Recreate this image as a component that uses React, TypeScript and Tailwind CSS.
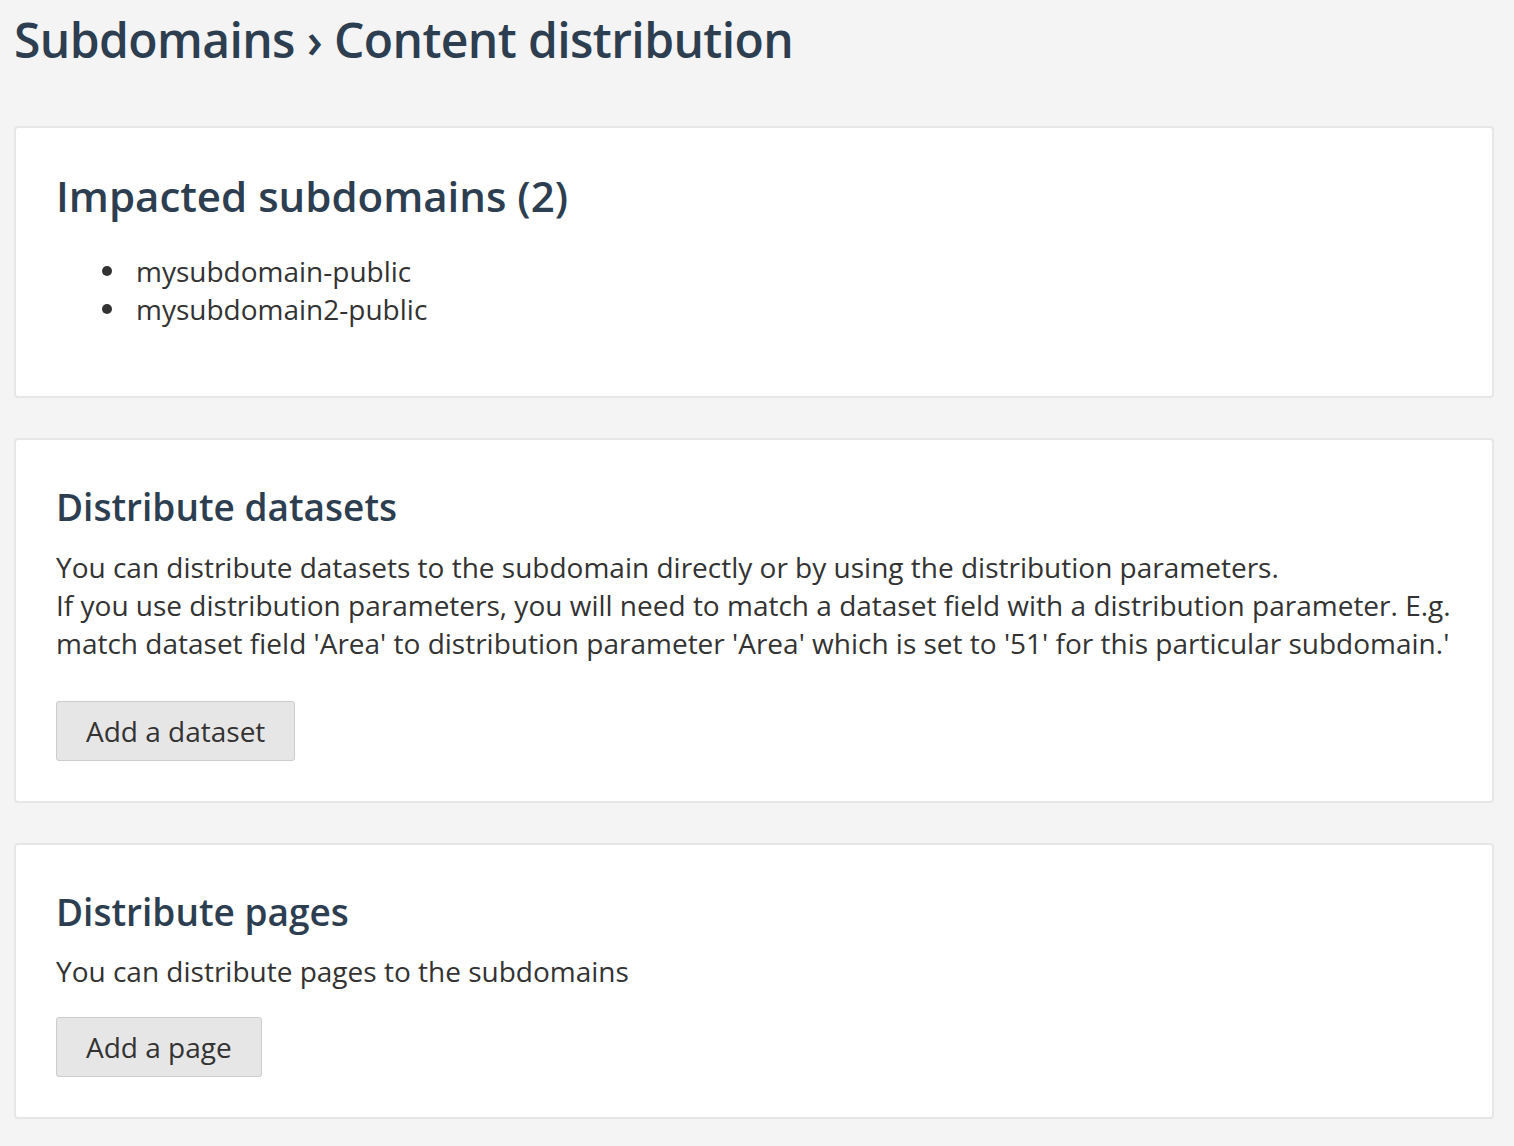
export default function App() {
  const subdomains = ["mysubdomain-public", "mysubdomain2-public"]

  return (
    <div className="min-h-screen bg-[#f4f4f4] pl-[14px] pr-[20px] pb-[26px] font-['Open_Sans',sans-serif] text-[#333]">
      <h1 className="text-[48px] leading-[80px] font-semibold text-[#2c3e50] tracking-[-0.6px]">
        Subdomains › Content distribution
      </h1>

      <div className="mt-[46px] flex flex-col gap-[40px]">
        <section className="rounded-[4px] border-2 border-[#e6e6e6] bg-white px-[40px] pt-[40px] pb-[40px]">
          <h2 className="text-[42px] leading-[55px] font-semibold text-[#2c3e50]">Impacted subdomains (2)</h2>
          <ul className="mt-[29px] mb-[28px] text-[28px] leading-[38px]">
            {subdomains.map((s) => (
              <li key={s} className="flex items-center">
                <span className="ml-[46px] mr-[24px] h-[10px] w-[10px] rounded-full bg-[#333]" />
                {s}
              </li>
            ))}
          </ul>
        </section>

        <section className="rounded-[4px] border-2 border-[#e6e6e6] bg-white px-[40px] pt-[40px] pb-[40px]">
          <h3 className="text-[37px] leading-[54px] font-semibold text-[#2c3e50]">Distribute datasets</h3>
          <p className="mt-[14px] text-[28px] leading-[38px]">
            You can distribute datasets to the subdomain directly or by using the distribution parameters.
            <br />
            If you use distribution parameters, you will need to match a dataset field with a distribution parameter. E.g.
            match dataset field 'Area' to distribution parameter 'Area' which is set to '51' for this particular subdomain.'
          </p>
          <button className="mt-[39px] rounded-[3px] border border-[#ccc] bg-[#e6e6e6] px-[29px] py-[10px] text-[28px] leading-[38px] text-[#333]">
            Add a dataset
          </button>
        </section>

        <section className="rounded-[4px] border-2 border-[#e6e6e6] bg-white px-[40px] pt-[40px] pb-[40px]">
          <h3 className="text-[37px] leading-[54px] font-semibold text-[#2c3e50]">Distribute pages</h3>
          <p className="mt-[13px] text-[28px] leading-[38px]">You can distribute pages to the subdomains</p>
          <button className="mt-[27px] rounded-[3px] border border-[#ccc] bg-[#e6e6e6] px-[29px] py-[10px] text-[28px] leading-[38px] text-[#333]">
            Add a page
          </button>
        </section>
      </div>
    </div>
  )
}
